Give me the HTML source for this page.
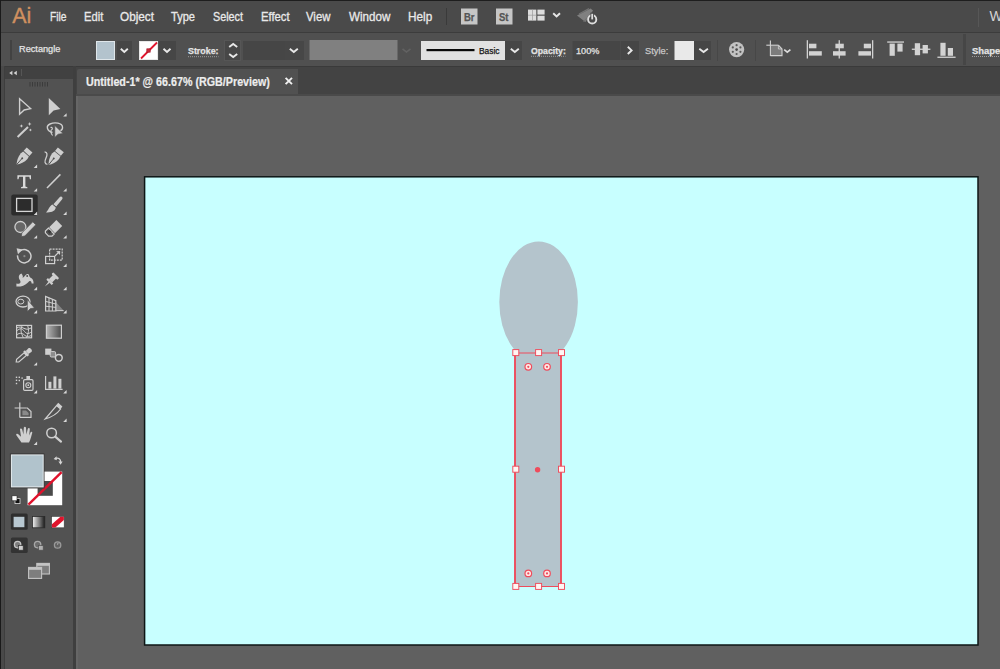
<!DOCTYPE html>
<html><head><meta charset="utf-8">
<style>
html,body{margin:0;padding:0;}
body{width:1000px;height:669px;overflow:hidden;background:#606060;position:relative;font-family:"Liberation Sans",sans-serif;color:#e6e6e6;}
.abs{position:absolute;}
#menubar{left:0;top:0;width:1000px;height:32px;background:#4a4a4a;border-top:1px solid #1e1e1e;box-sizing:border-box;}
#ctrl{left:0;top:32px;width:1000px;height:34px;background:#505050;border-top:1px solid #3c3c3c;box-sizing:border-box;}
#tabbar{left:74px;top:66px;width:926px;height:30px;background:#434343;border-top:1px solid #3a3a3a;border-bottom:2px solid #4a4a4a;box-sizing:border-box;}
#tab{left:77px;top:69px;width:221px;height:25px;background:#515151;border-radius:2px 0 0 0;}
#tools{left:0;top:66px;width:74px;height:603px;background:#525252;border-top:1px solid #3a3a3a;box-sizing:border-box;}
#toolhead{left:5px;top:67px;width:69px;height:12px;background:#414141;}
#leftedge{left:0;top:0;width:1px;height:669px;background:#1a1a1a;}
#leftstrip{left:1px;top:66px;width:4px;height:603px;background:#494949;border-right:1px solid #3e3e3e;box-sizing:border-box;}
#tooledge{left:73px;top:66px;width:3px;height:603px;background:#3f3f3f;}
#tooledge2{left:76px;top:96px;width:2px;height:573px;background:#666;}
#artboard{left:144px;top:176px;width:834px;height:470px;background:#c8ffff;border:1px solid #151515;box-sizing:border-box;}
.menu{position:absolute;top:9.5px;-webkit-text-stroke:.3px #e9e9e9;transform-origin:0 0;font-size:12.5px;color:#e9e9e9;white-space:nowrap;line-height:15px;}
.ct{position:absolute;transform-origin:0 0;white-space:nowrap;line-height:12px;font-size:9px;-webkit-text-stroke:.25px;color:#e4e4e4;}
.b{font-weight:bold;}
.dd{position:absolute;background:#434343;}
#tabtitle{left:85.6px;top:76.3px;-webkit-text-stroke:.2px #ededed;font-size:12px;font-weight:bold;color:#ededed;white-space:nowrap;line-height:13px;}
</style></head><body>
<div id="menubar" class="abs"></div>
<div id="ctrl" class="abs"></div>
<div id="tabbar" class="abs"></div>
<div id="tab" class="abs"></div>
<div id="tools" class="abs"></div>
<div id="leftstrip" class="abs"></div>
<div id="toolhead" class="abs"></div>
<div id="tooledge" class="abs"></div>
<div id="tooledge2" class="abs"></div>
<div id="leftedge" class="abs"></div>

<!-- ARTWORK -->
<svg class="abs" id="art" style="left:140px;top:170px" width="845" height="482" viewBox="140 170 845 482">
 <rect x="144.6" y="176.8" width="833.4" height="468.2" fill="#c8ffff" stroke="#0e1616" stroke-width="1.5"/>
 <ellipse cx="538.6" cy="302" rx="39.3" ry="60.5" fill="#b4c4cc"/>
 <rect x="515" y="353" width="46" height="233.5" fill="#b4c4cc"/><path d="M515,353 V586.5 M561,353 V586.5" stroke="#ee4c5c" stroke-width="1.9" fill="none"/><path d="M515,353 H561 M515,586.5 H561" stroke="#ee4c5c" stroke-width="1.2" fill="none"/>
 <rect x="512.8" y="349.6" width="6" height="6" fill="#fff5f3" stroke="#ee4c5c" stroke-width=".95"/><rect x="535.6" y="349.6" width="6" height="6" fill="#fff5f3" stroke="#ee4c5c" stroke-width=".95"/><rect x="558.5" y="349.6" width="6" height="6" fill="#fff5f3" stroke="#ee4c5c" stroke-width=".95"/>
 <rect x="512.8" y="466.2" width="6" height="6" fill="#fff5f3" stroke="#ee4c5c" stroke-width=".95"/><rect x="558.5" y="466.2" width="6" height="6" fill="#fff5f3" stroke="#ee4c5c" stroke-width=".95"/>
 <rect x="512.8" y="583.4" width="6" height="6" fill="#fff5f3" stroke="#ee4c5c" stroke-width=".95"/><rect x="535.6" y="583.4" width="6" height="6" fill="#fff5f3" stroke="#ee4c5c" stroke-width=".95"/><rect x="558.5" y="583.4" width="6" height="6" fill="#fff5f3" stroke="#ee4c5c" stroke-width=".95"/>
 <circle cx="537.6" cy="469.8" r="2.7" fill="#ee4c5c"/>
 <circle cx="528.3" cy="366.8" r="3.3" fill="#ffe9e6" stroke="#ee4c5c" stroke-width="1.2"/><circle cx="528.3" cy="366.8" r="1.1" fill="#ee4c5c"/><circle cx="547" cy="366.8" r="3.3" fill="#ffe9e6" stroke="#ee4c5c" stroke-width="1.2"/><circle cx="547" cy="366.8" r="1.1" fill="#ee4c5c"/><circle cx="528.3" cy="573.4" r="3.3" fill="#ffe9e6" stroke="#ee4c5c" stroke-width="1.2"/><circle cx="528.3" cy="573.4" r="1.1" fill="#ee4c5c"/><circle cx="547" cy="573.4" r="3.3" fill="#ffe9e6" stroke="#ee4c5c" stroke-width="1.2"/><circle cx="547" cy="573.4" r="1.1" fill="#ee4c5c"/>
</svg>
<!-- MENU TEXT -->
<div class="menu" id="m1" style="left:50.4px;transform:scaleX(.822)">File</div>
<div class="menu" id="m2" style="left:84.4px;transform:scaleX(.893)">Edit</div>
<div class="menu" id="m3" style="left:120px;transform:scaleX(.942)">Object</div>
<div class="menu" id="m4" style="left:171px;transform:scaleX(.886)">Type</div>
<div class="menu" id="m5" style="left:213px;transform:scaleX(.862)">Select</div>
<div class="menu" id="m6" style="left:261px;transform:scaleX(.902)">Effect</div>
<div class="menu" id="m7" style="left:306px;transform:scaleX(.907)">View</div>
<div class="menu" id="m8" style="left:349px;transform:scaleX(.930)">Window</div>
<div class="menu" id="m9" style="left:408.4px;transform:scaleX(.942)">Help</div>
<div class="menu" id="mW" style="left:989.4px;top:6.5px;font-size:14px;line-height:18px;color:#d4d4d4;-webkit-text-stroke:0;">W</div>
<div class="abs" id="ailogo" style="left:12.2px;top:2.9px;font-size:21.5px;line-height:26px;color:#cf9060;-webkit-text-stroke:.35px #cf9060;transform:scaleX(1.0);transform-origin:0 0;">Ai</div>

<!-- CONTROL BAR WIDGETS -->
<svg class="abs" id="ctrlsvg" style="left:0;top:0" width="1000" height="669" viewBox="0 0 1000 669">
 <!-- grip -->
 <rect x="10" y="40" width="2" height="20" fill="#424242"/>
 <!-- fill swatch -->
 <rect x="96.5" y="41.5" width="18" height="18" fill="#b3c3cd" stroke="#dfe6ea" stroke-width="1"/>
 <rect x="117" y="41" width="15" height="19" fill="#464646"/>
 <polyline points="120.8,48.8 124.3,52 127.8,48.8" fill="none" stroke="#e8e8e8" stroke-width="1.9"/>
 <!-- stroke swatch -->
 <rect x="139.5" y="41.5" width="18" height="18" fill="#ffffff" stroke="#e8e8e8" stroke-width="1"/>
 <line x1="141" y1="58.5" x2="157" y2="42.5" stroke="#e0142c" stroke-width="1.8"/>
 <rect x="146.8" y="48.8" width="3.4" height="3.4" fill="#c8283a" stroke="#a01020" stroke-width=".6"/>
 <rect x="159" y="41" width="17" height="19" fill="#464646"/>
 <polyline points="163.5,48.8 167,52 170.5,48.8" fill="none" stroke="#e8e8e8" stroke-width="1.9"/>
 <!-- Stroke underline -->
 <line x1="188" y1="56.7" x2="218.5" y2="56.7" stroke="#9c9c9c" stroke-width="1" stroke-dasharray="1,1"/>
 <!-- spinner -->
 <rect x="224.5" y="40.5" width="16" height="20" fill="#474747" stroke="#565656" stroke-width="1"/>
 <polyline points="229.2,47 233.2,44 237.2,47" fill="none" stroke="#e8e8e8" stroke-width="1.9"/>
 <polyline points="229.2,54 233.2,57 237.2,54" fill="none" stroke="#e8e8e8" stroke-width="1.9"/>
 <rect x="243" y="41" width="42" height="19" fill="#464646"/>
 <rect x="285" y="41" width="19" height="19" fill="#474747"/>
 <polyline points="289.8,48.8 293.8,52 297.8,48.8" fill="none" stroke="#e8e8e8" stroke-width="1.9"/>
 <!-- profile disabled -->
 <rect x="309.5" y="40" width="88" height="20" fill="#808080"/>
 <polyline points="402.5,48.8 406.5,52 410.5,48.8" fill="none" stroke="#626262" stroke-width="1.6"/>
 <!-- brush -->
 <rect x="421" y="41" width="84" height="19" fill="#e1e1e1"/>
 <rect x="426.5" y="49" width="48" height="2.2" fill="#0a0a0a"/>
 <rect x="505" y="41" width="17" height="19" fill="#464646"/>
 <polyline points="510.8,48.8 514.8,52 518.8,48.8" fill="none" stroke="#e8e8e8" stroke-width="1.9"/>
 <!-- Opacity underline -->
 <line x1="531" y1="56.3" x2="565.5" y2="56.3" stroke="#9c9c9c" stroke-width="1" stroke-dasharray="1,1"/>
 <rect x="572.5" y="41" width="48" height="19" fill="#464646"/>
 <rect x="621" y="41" width="18" height="19" fill="#464646"/>
 <polyline points="627.8,46.8 631.6,50.4 627.8,54" fill="none" stroke="#e8e8e8" stroke-width="1.9"/>
 <!-- style -->
 <rect x="674.5" y="41" width="19.5" height="19" fill="#e9e9e9"/>
 <rect x="694" y="41" width="17" height="19" fill="#464646"/>
 <polyline points="699.3,48.8 703.6,52 707.9,48.8" fill="none" stroke="#e8e8e8" stroke-width="1.9"/>
 <line x1="717.5" y1="40" x2="717.5" y2="61" stroke="#474747" stroke-width="1"/>
 <!-- recolor -->
 <circle cx="736.6" cy="49.6" r="7.6" fill="#c2c2c2"/>
 <g fill="#5a5a5a">
  <circle cx="736.6" cy="45.2" r="1.1"/><circle cx="740.4" cy="47.4" r="1.1"/><circle cx="740.4" cy="51.8" r="1.1"/>
  <circle cx="736.6" cy="54" r="1.1"/><circle cx="732.8" cy="51.8" r="1.1"/><circle cx="732.8" cy="47.4" r="1.1"/>
  <circle cx="736.6" cy="49.6" r="1.3" fill="#4a4a4a"/>
 </g>
 <line x1="755.5" y1="40" x2="755.5" y2="61" stroke="#474747" stroke-width="1"/>
 <!-- doc setup -->
 <path d="M770.9,45.4 L778.4,45.4 L782,49 L782,55.4 L770.9,55.4 Z" fill="#7c7c7c"/>
 <g fill="none" stroke="#d2d2d2" stroke-width="1.1">
  <line x1="770.4" y1="40.5" x2="770.4" y2="56"/><line x1="766.3" y1="45.2" x2="778.4" y2="45.2"/>
  <polyline points="770.4,55.6 782,55.6 782,49 778.4,45.2"/>
  <polyline points="778.4,45.2 778.4,49 782,49" stroke-width=".8"/>
 </g>
 <polyline points="784.2,49.6 787.3,52.2 790.4,49.6" fill="none" stroke="#dcdcdc" stroke-width="1.7"/>
 <!-- align left -->
 <g fill="#d2d2d2">
  <rect x="806.7" y="40.2" width="1.3" height="18.3"/>
  <rect x="809" y="43.7" width="7.4" height="4.6"/><rect x="809" y="51.2" width="12.8" height="4.4"/>
 </g>
 <!-- align center -->
 <g fill="#d2d2d2">
  <rect x="838.6" y="40.2" width="1.3" height="18.3"/>
  <rect x="835.4" y="43.7" width="8.4" height="4.6"/><rect x="833" y="51.2" width="12.6" height="4.4"/>
 </g>
 <!-- align right -->
 <g fill="#d2d2d2">
  <rect x="872" y="40.2" width="1.3" height="18.3"/>
  <rect x="863.8" y="43.7" width="7.2" height="4.6"/><rect x="858.4" y="51.2" width="12.6" height="4.4"/>
 </g>
 <!-- align top -->
 <g fill="#d2d2d2">
  <rect x="887.2" y="41.4" width="16.8" height="1.3"/>
  <rect x="889.6" y="43.6" width="5.2" height="12.2"/><rect x="897.4" y="43.6" width="5.2" height="8"/>
 </g>
 <!-- align vcenter -->
 <g fill="#d2d2d2">
  <rect x="911.8" y="48.6" width="18.6" height="1.3"/>
  <rect x="914.8" y="43.2" width="5.3" height="12"/><rect x="922.6" y="45" width="5.3" height="8.4"/>
 </g>
 <!-- align bottom -->
 <g fill="#d2d2d2">
  <rect x="937.4" y="56.6" width="18.2" height="1.3"/>
  <rect x="940.4" y="42.8" width="5.2" height="13"/><rect x="947.8" y="48" width="5.2" height="7.8"/>
 </g>
 <rect x="963" y="34" width="3" height="31" fill="#464646"/>
 <line x1="972" y1="56.5" x2="1000" y2="56.5" stroke="#9c9c9c" stroke-width="1" stroke-dasharray="1,1"/>

 <!-- MENU BAR ICONS -->
 <line x1="446.5" y1="8" x2="446.5" y2="25" stroke="#3a3a3a" stroke-width="1"/>
 <rect x="461" y="8.5" width="16.5" height="16" fill="#c6c6c6"/>
 <rect x="496" y="8.5" width="16.5" height="16" fill="#c6c6c6"/>
 <g fill="#dcdcdc">
  <rect x="528" y="9.6" width="8.3" height="11"/><rect x="537.4" y="9.6" width="7.2" height="5"/>
  <rect x="537.4" y="15.7" width="7.2" height="4.9"/>
  <rect x="532" y="9.6" width=".7" height="11" fill="#9a9a9a"/><rect x="528" y="14.8" width="8.3" height=".7" fill="#9a9a9a"/>
 </g>
 <polyline points="553.2,13.2 556.6,16.4 560,13.2" fill="none" stroke="#e6e6e6" stroke-width="2"/>
 <!-- gpu icon -->
 <g>
  <path d="M577,15.6 L590.6,8.4 L593,10.6 L585.4,22 Z" fill="#808080"/>
  <path d="M579,14 L589,8.6 M583.6,21.6 L592,12.6" stroke="#727272" stroke-width="1.2"/>
  <circle cx="592.2" cy="19.4" r="4.1" fill="#4a4a4a" stroke="#dedede" stroke-width="1.9"/>
  <rect x="590.4" y="12.6" width="3.6" height="5.4" fill="#4a4a4a"/>
  <line x1="592.2" y1="13.8" x2="592.2" y2="19.4" stroke="#dedede" stroke-width="1.8"/>
 </g>
 <line x1="978.5" y1="8" x2="978.5" y2="27" stroke="#575757" stroke-width="1"/>
</svg>
<div class="ct b" style="left:463.5px;top:10.5px;font-size:10.5px;color:#555;transform:scaleX(.9)">Br</div>
<div class="ct b" style="left:499px;top:10.5px;font-size:10.5px;color:#555;transform:scaleX(.9)">St</div>

<!-- CONTROL BAR TEXT -->
<div class="ct" id="c1" style="left:18.6px;top:43.3px;transform:scaleX(1.02)">Rectangle</div>
<div class="ct b" id="c2" style="left:188.2px;top:45.4px;transform:scaleX(.985)">Stroke:</div>
<div class="ct" id="c3" style="left:479px;top:45.4px;color:#111;transform:scaleX(.934)">Basic</div>
<div class="ct b" id="c4" style="left:530.8px;top:45px;transform:scaleX(.967)">Opacity:</div>
<div class="ct" id="c5" style="left:575.8px;top:45px;transform:scaleX(1.015)">100%</div>
<div class="ct" id="c6" style="left:644.7px;top:45.2px;color:#c8c8c8;transform:scaleX(1.033)">Style:</div>
<div class="ct b" id="c7" style="left:971.8px;top:45.2px;transform:scaleX(1.05)">Shape:</div>

<div id="tabtitle" class="abs" style="transform:scaleX(.894);transform-origin:0 0;">Untitled-1* @ 66.67% (RGB/Preview)</div>
<svg class="abs" style="left:280px;top:72px" width="18" height="18" viewBox="280 72 18 18"><path d="M285.6,77.8 L292,84.2 M292,77.8 L285.6,84.2" stroke="#f0f0f0" stroke-width="1.9"/></svg>

<!-- TOOLBOX -->
<svg class="abs" id="toolsvg" style="left:0;top:66px" width="76" height="603" viewBox="0 66 76 603">
 <!-- header arrows -->
 <path d="M12.4,70.8 L9.2,73 L12.4,75.2 Z M16.8,70.8 L13.6,73 L16.8,75.2 Z" fill="#d2d2d2"/>
 <rect x="21" y="69" width="1" height="7" fill="#565656"/>
 <!-- gripper -->
 <g fill="#3b3b3b">
  <rect x="29.5" y="82" width="1" height="4.5"/><rect x="32" y="82" width="1" height="4.5"/><rect x="34.5" y="82" width="1" height="4.5"/><rect x="37" y="82" width="1" height="4.5"/><rect x="39.5" y="82" width="1" height="4.5"/><rect x="42" y="82" width="1" height="4.5"/><rect x="44.5" y="82" width="1" height="4.5"/><rect x="47" y="82" width="1" height="4.5"/>
 </g>
 <!-- selection -->
 <path d="M19.6,98.8 L19.6,114.2 L24.2,110 L30.6,108.6 Z" fill="none" stroke="#cfcfcf" stroke-width="1.4" stroke-linejoin="miter"/>
 <!-- direct selection -->
 <path d="M48.8,98 L48.8,115.2 L53.6,110.6 L60.4,109 Z" fill="#cfcfcf"/>
 <path d="M66.6,113.2 L66.6,116.6 L63.2,116.6 Z" fill="#d8d8d8"/>
 <!-- magic wand -->
 <line x1="17.6" y1="137" x2="28" y2="127" stroke="#cfcfcf" stroke-width="2"/>
 <path d="M21.4,124.2 L22,125.5 L23.3,126 L22,126.5 L21.4,127.8 L20.8,126.5 L19.5,126 L20.8,125.5 Z" fill="#cfcfcf"/>
 <path d="M29.6,122 L30.2,123.4 L31.6,124 L30.2,124.6 L29.6,126 L29,124.6 L27.6,124 L29,123.4 Z" fill="#cfcfcf"/>
 <path d="M30.4,128.4 L30.9,129.5 L32,130 L30.9,130.5 L30.4,131.6 L29.9,130.5 L28.8,130 L29.9,129.5 Z" fill="#cfcfcf"/>
 <!-- lasso -->
 <path d="M52.5,132.5 C47,131 45.5,126 50,124 C55,121.8 62,123 62.5,127 C62.8,129 61,130.5 59.5,131" fill="none" stroke="#cfcfcf" stroke-width="1.4"/>
 <path d="M50.5,127.5 C52.5,127 53,129 51.6,129.8 C50.4,130.4 50.6,133 52.6,135.5" fill="none" stroke="#cfcfcf" stroke-width="1.1"/>
 <path d="M54.8,125.6 L54.8,137.4 L58,134.2 L63,133.4 Z" fill="#cfcfcf" stroke="#505050" stroke-width=".6"/>
 <!-- pen -->
 <g transform="translate(16.6,164.6) rotate(-48.5)">
  <path d="M0,0 C3,-2.4 7,-4.4 11.4,-4.4 L14.2,-3.8 L14.2,3.8 L11.4,4.4 C7,4.4 3,2.4 0,0 Z" fill="#cfcfcf"/>
  <rect x="15" y="-3.8" width="4.6" height="7.6" fill="#cfcfcf"/>
  <line x1="0" y1="0" x2="8" y2="0" stroke="#505050" stroke-width=".9"/><circle cx="8.4" cy="0" r="1" fill="#505050"/>
 </g>
 <path d="M37.1,164.6 L37.1,168.0 L33.7,168.0 Z" fill="#d8d8d8"/>
 <!-- curvature -->
 <g transform="translate(48.5,165) rotate(-51)">
  <path d="M0,0 C3,-2.4 7,-4.4 11.4,-4.4 L14.2,-3.8 L14.2,3.8 L11.4,4.4 C7,4.4 3,2.4 0,0 Z" fill="#cfcfcf"/>
  <rect x="15" y="-3.8" width="4.6" height="7.6" fill="#cfcfcf"/>
  <line x1="0" y1="0" x2="8" y2="0" stroke="#505050" stroke-width=".9"/><circle cx="8.4" cy="0" r="1" fill="#505050"/>
 </g>
 <path d="M44.6,151.8 C47.6,152 47.4,155 46,158 C44.4,161.5 44.6,164.2 47.4,164.4" fill="none" stroke="#cfcfcf" stroke-width="1.3"/>
 <!-- type -->
 <path d="M17.4,175.2 L31,175.2 L31,179.2 L29.9,179.2 L29.3,176.8 L25.4,176.8 L25.4,186.4 L27.4,187.2 L27.4,188.3 L21,188.3 L21,187.2 L23,186.4 L23,176.8 L19.1,176.8 L18.5,179.2 L17.4,179.2 Z" fill="#dadada"/>
 <path d="M37.1,188.2 L37.1,191.6 L33.7,191.6 Z" fill="#d8d8d8"/>
 <!-- line -->
 <line x1="47" y1="188" x2="60.4" y2="174.4" stroke="#cfcfcf" stroke-width="1.5"/>
 <path d="M66.6,188.2 L66.6,191.6 L63.2,191.6 Z" fill="#d8d8d8"/>
 <!-- rectangle (selected) -->
 <rect x="11.3" y="194.6" width="26.4" height="21" rx="2" fill="#2c2c2c"/>
 <rect x="16.6" y="198.4" width="15.4" height="13" fill="none" stroke="#d6d6d6" stroke-width="1.3"/>
 <path d="M37.2,211.6 L37.2,215.0 L33.800000000000004,215.0 Z" fill="#d8d8d8"/>
 <!-- paintbrush -->
 <path d="M61.6,196.8 C62.8,197.4 62.8,198.6 62,199.6 L56.2,206.6 L53.4,204.2 L59.4,197.4 C60.2,196.6 61,196.4 61.6,196.8 Z" fill="#cfcfcf"/>
 <path d="M52.4,204.6 L55.8,207.6 C55.4,211 51.5,212.8 46,212.4 C48.6,210.5 49,206.2 52.4,204.6 Z" fill="#cfcfcf"/>
 <path d="M66.6,211.6 L66.6,215.0 L63.2,215.0 Z" fill="#d8d8d8"/>
 <!-- shaper -->
 <circle cx="20.4" cy="227" r="5.5" fill="#666" stroke="#cfcfcf" stroke-width="1.3"/>
 <path d="M21.8,233 L32.8,221.8 L35.8,224.8 L24.8,236 L21.4,236.6 Z" fill="#cfcfcf" stroke="#505050" stroke-width=".7"/>
 <path d="M37.1,235.2 L37.1,238.6 L33.7,238.6 Z" fill="#d8d8d8"/>
 <!-- eraser -->
 <path d="M56.4,220 L62.2,226 L55,233.2 L49.2,227.2 Z" fill="#cfcfcf"/>
 <path d="M48.4,228 L54.2,234 L52,236.2 L48.6,236.2 L45.4,232.8 L45.4,231 Z" fill="none" stroke="#cfcfcf" stroke-width="1.2"/>
 <rect x="48" y="230.4" width="3" height="2.6" fill="#3a3a3a" transform="rotate(45 49.5 231.7)"/>
 <path d="M66.6,235.2 L66.6,238.6 L63.2,238.6 Z" fill="#d8d8d8"/>
 <!-- rotate -->
 <path d="M20,251 A6.7,6.7 0 1 1 17.6,255.4" fill="none" stroke="#cfcfcf" stroke-width="1.5"/><circle cx="24.4" cy="256.2" r="1.1" fill="#8a8a8a"/>
 <path d="M16.6,248.2 L22.6,249.6 L18,254.2 Z" fill="#cfcfcf"/>
 <path d="M37.1,263.59999999999997 L37.1,267.0 L33.7,267.0 Z" fill="#d8d8d8"/>
 <!-- scale -->
 <rect x="45.6" y="256.4" width="9" height="7.2" fill="none" stroke="#cfcfcf" stroke-width="1.2"/>
 <rect x="49.6" y="249.2" width="12.6" height="11" fill="none" stroke="#cfcfcf" stroke-width="1.2" stroke-dasharray="2,1"/>
 <path d="M60.2,251 L56.2,251.2 L60,255 Z" fill="#cfcfcf"/><line x1="55" y1="256" x2="59" y2="252" stroke="#cfcfcf" stroke-width="1.1"/>
 <path d="M66.6,263.59999999999997 L66.6,267.0 L63.2,267.0 Z" fill="#d8d8d8"/>
 <!-- width/warp -->
 <path d="M16.4,286.4 L16.4,283.6 C20,284.4 21.5,282.5 19.8,280 C18,277.4 18.8,274.4 21.4,273.6 C22.4,275 23.4,276.4 22.6,278 C25,276.6 25.6,274.4 27.4,274 C29.6,273.8 28.8,276.8 30.6,277.8 C32.6,278.6 33.6,280.6 33.6,283.4 L31.6,283.4 C31.6,281.4 30.6,280.4 29.2,281.2 C27,283.6 24.2,286 20.6,286.4 Z" fill="#cfcfcf"/>
 <circle cx="27.2" cy="276" r="1" fill="#505050"/>
 <path d="M37.1,286.8 L37.1,290.20000000000005 L33.7,290.20000000000005 Z" fill="#d8d8d8"/>
 <!-- puppet pin -->
 <g transform="translate(44.8,286.6) rotate(-45)">
  <path d="M0,0 L6.2,-0.9 L6.2,0.9 Z" fill="#cfcfcf"/>
  <rect x="6" y="-3.8" width="2.2" height="7.6" fill="#cfcfcf"/>
  <rect x="8" y="-2.3" width="6" height="4.6" fill="#cfcfcf"/>
  <rect x="13.6" y="-4.2" width="2.6" height="8.4" rx="1" fill="#cfcfcf"/>
 </g>
 <path d="M66.6,286.8 L66.6,290.20000000000005 L63.2,290.20000000000005 Z" fill="#d8d8d8"/>
 <!-- shape builder -->
 <ellipse cx="23" cy="301.6" rx="7" ry="5.4" fill="none" stroke="#cfcfcf" stroke-width="1.3"/>
 <ellipse cx="20.8" cy="301.6" rx="3" ry="2.4" fill="none" stroke="#cfcfcf" stroke-width="1"/>
 <path d="M27.4,299.6 L27.4,311.6 L30.4,308.6 L34.4,308 Z" fill="#cfcfcf" stroke="#505050" stroke-width=".6"/>
 <path d="M37.1,310.0 L37.1,313.40000000000003 L33.7,313.40000000000003 Z" fill="#d8d8d8"/>
 <!-- perspective grid -->
 <path d="M55.8,302 L63.6,310.6 L55.8,310.8 Z" fill="#858585"/>
 <path d="M45.6,296.4 L45.6,311 L55.8,310.8 L55.8,300.6 Z" fill="none" stroke="#cfcfcf" stroke-width="1.2"/>
 <path d="M49,297.8 L49,310.9 M52.4,299.2 L52.4,310.9 M45.6,301.4 L55.8,304 M45.6,306.2 L55.8,307.4 M55.8,310.7 L63.6,310.6" fill="none" stroke="#cfcfcf" stroke-width="1"/>
 <path d="M66.6,310.0 L66.6,313.4 L63.2,313.4 Z" fill="#d8d8d8"/>
 <!-- mesh -->
 <rect x="16.6" y="325.4" width="15" height="12.4" fill="none" stroke="#cfcfcf" stroke-width="1.2"/>
 <path d="M16.6,331 C20,328 22,328 24.4,331.4 C27,334.6 29,334 31.6,331.6 M22.4,325.4 C20,329 21,333 23.4,337.8 M27.4,325.4 C29.4,329 28.4,334 26.4,337.8 M16.6,335 C20,332 23,333.4 25,335.6 C27,337 29.6,336.4 31.6,335.4 M16.6,328 C19,326.6 21.6,326.8 24,328.4 C27,330 29.6,329 31.6,327.6" fill="none" stroke="#cfcfcf" stroke-width="1"/>
 <!-- gradient -->
 <defs><linearGradient id="g1" x1="0" x2="1" y1="0" y2="0"><stop offset="0" stop-color="#b8b8b8"/><stop offset="1" stop-color="#4a4a4a"/></linearGradient>
 <linearGradient id="g2" x1="0" x2="1" y1="0" y2="0"><stop offset="0" stop-color="#f4f4f4"/><stop offset="1" stop-color="#1a1a1a"/></linearGradient></defs>
 <rect x="46.4" y="325.2" width="15" height="13" fill="url(#g1)" stroke="#cfcfcf" stroke-width="1.2"/>
 <!-- eyedropper -->
 <g transform="translate(16.2,362) rotate(-41)">
  <path d="M0,0 L2,-1.7 L12,-1.7 L12,1.7 L2,1.7 Z" fill="none" stroke="#cfcfcf" stroke-width="1.2"/>
  <rect x="12" y="-3.2" width="2.4" height="6.4" fill="#cfcfcf"/>
  <path d="M14.4,-2 L18,-2.4 C20.4,-2.4 20.4,2.4 18,2.4 L14.4,2 Z" fill="#cfcfcf"/>
 </g>
 <path d="M37.1,362.2 L37.1,365.6 L33.7,365.6 Z" fill="#d8d8d8"/>
 <!-- blend -->
 <rect x="45.2" y="348.6" width="6.2" height="6.2" fill="#cfcfcf"/>
 <rect x="50.2" y="351.6" width="5.4" height="5.4" rx="1.2" fill="#8c8c8c" stroke="#cfcfcf" stroke-width="1"/>
 <circle cx="58.8" cy="357.8" r="3.4" fill="#505050" stroke="#cfcfcf" stroke-width="1.5"/>
 <!-- symbol sprayer -->
 <rect x="23.6" y="379.6" width="9.4" height="10.8" rx="1.2" fill="none" stroke="#cfcfcf" stroke-width="1.2"/>
 <rect x="26.4" y="376" width="3.6" height="3.4" fill="#cfcfcf"/>
 <circle cx="28.3" cy="385.2" r="2.5" fill="none" stroke="#cfcfcf" stroke-width="1.1"/><circle cx="28.3" cy="385.2" r=".9" fill="#cfcfcf"/>
 <g fill="#cfcfcf"><rect x="15.8" y="376.6" width="1.4" height="1.4"/><rect x="18.6" y="376.6" width="1.4" height="1.4"/><rect x="21.4" y="377.4" width="1.4" height="1.4"/><rect x="15.8" y="379.6" width="1.4" height="1.4"/><rect x="18.6" y="379.8" width="1.4" height="1.4"/><rect x="15.8" y="382.8" width="1.4" height="1.4"/></g>
 <path d="M37.1,390.0 L37.1,393.40000000000003 L33.7,393.40000000000003 Z" fill="#d8d8d8"/>
 <!-- graph -->
 <path d="M45.6,376 L45.6,389.4 L62.6,389.4" fill="none" stroke="#cfcfcf" stroke-width="1.2"/>
 <rect x="48.4" y="381.8" width="3" height="6.8" fill="#cfcfcf"/><rect x="53.4" y="376.4" width="3" height="12.2" fill="#cfcfcf"/><rect x="58.4" y="378.8" width="3" height="9.8" fill="#cfcfcf"/>
 <path d="M66.6,390.0 L66.6,393.40000000000003 L63.2,393.40000000000003 Z" fill="#d8d8d8"/>
 <!-- artboard -->
 <path d="M19.8,402.4 L19.8,417.6 M14.6,408 L26.4,408" fill="none" stroke="#cfcfcf" stroke-width="1.2"/>
 <path d="M19.8,417.4 L31,417.4 L31,411.6 L27.4,408 L26.4,408" fill="none" stroke="#cfcfcf" stroke-width="1.2"/>
 <path d="M22.4,410.4 L26,410.4 L28.6,413 L28.6,415.2 L22.4,415.2 Z" fill="#8a8a8a"/>
 <!-- slice -->
 <path d="M45.2,419 L56.6,405.6 L60.6,409 C57,414 52,417 45.2,419 Z" fill="none" stroke="#cfcfcf" stroke-width="1.2"/>
 <path d="M56.2,405.2 L58.2,402.8 L62.4,406.4 L60.6,409 Z" fill="#cfcfcf"/>
 <path d="M66.6,418.59999999999997 L66.6,422.0 L63.2,422.0 Z" fill="#d8d8d8"/>
 <!-- hand -->
 <path d="M21.4,442.6 C19.4,439 17.4,437 16.2,435 C16,433.6 17.6,433.4 18.6,434.4 L21,436.8 L20,429.6 C20,428.2 21.8,428.2 22.2,429.6 L23.4,434.6 L23.8,427.8 C24,426.4 25.8,426.4 26,427.8 L26.4,434.6 L27.8,428.8 C28.2,427.6 29.8,427.8 29.8,429.2 L29.2,435.6 L30.6,432.2 C31.2,431.2 32.6,431.6 32.2,433 C31.4,436 30.6,439.6 29,442.6 Z" fill="#cfcfcf"/>
 <path d="M37.1,441.59999999999997 L37.1,445.0 L33.7,445.0 Z" fill="#d8d8d8"/>
 <!-- zoom -->
 <circle cx="51.6" cy="433" r="4.8" fill="none" stroke="#cfcfcf" stroke-width="1.5"/>
 <line x1="55.2" y1="436.6" x2="61" y2="441.6" stroke="#cfcfcf" stroke-width="2.2" stroke-linecap="round"/>

 <!-- fill / stroke -->
 <rect x="27.6" y="471.6" width="34.6" height="33.6" fill="#ffffff"/>
 <rect x="37.6" y="481" width="15.2" height="14.8" fill="#4a4a4a"/>
 <line x1="28.4" y1="504.6" x2="61.6" y2="472.2" stroke="#e0122c" stroke-width="2.4"/>
 <rect x="9.9" y="453.4" width="34.6" height="35" fill="#383838"/>
 <rect x="10.9" y="454.4" width="32.8" height="33" fill="#e4eaed"/>
 <rect x="11.9" y="455.4" width="30.8" height="31" fill="#b1c3cc"/>
 <!-- swap -->
 <path d="M55.2,458.6 C58.4,457.2 61,459.2 60.6,462.4" fill="none" stroke="#d4d4d4" stroke-width="1.3"/>
 <path d="M53.6,459 L56.6,456.2 L56.8,460.2 Z M58.4,461.6 L62.6,461.6 L60.6,464.8 Z" fill="#d4d4d4"/>
 <!-- default -->
 <rect x="15" y="498.6" width="5" height="5" fill="#111" stroke="#ddd" stroke-width=".8"/>
 <rect x="12" y="495.8" width="5" height="5" fill="#ffffff" stroke="#222" stroke-width=".6"/>
 <!-- color / gradient / none -->
 <rect x="10.9" y="513.6" width="16.8" height="16.2" rx="1.5" fill="#2e2e2e"/>
 <rect x="13.6" y="516.8" width="10.8" height="10.4" fill="#b8c8d1"/>
 <rect x="32.4" y="516.4" width="12.4" height="11.4" fill="url(#g2)" stroke="#2a2a2a" stroke-width=".8"/>
 <rect x="51.6" y="516.4" width="12.6" height="11.4" fill="#ffffff" stroke="#3a3a3a" stroke-width=".6"/>
 <path d="M51.9,527.5 L51.9,524.2 L60.4,516.7 L63.9,516.7 L63.9,520 L55.4,527.5 Z" fill="#e0142c"/>
 <!-- draw modes -->
 <rect x="10.9" y="537.4" width="16.8" height="15.6" rx="1.5" fill="#333"/>
 <g fill="none" stroke="#c4c4c4" stroke-width="1.3">
  <circle cx="17.6" cy="544.6" r="3.2" fill="#7c7c7c"/><circle cx="37.6" cy="544.6" r="3.2" stroke="#a8a8a8" fill="#6c6c6c"/><circle cx="57.6" cy="545" r="3.2" stroke="#9a9a9a" fill="#626262"/>
 </g>
 <rect x="18.6" y="545.6" width="4.6" height="4.6" fill="#cfcfcf" stroke="#333" stroke-width=".7"/>
 <rect x="38.6" y="545.6" width="4.6" height="4.6" fill="#b0b0b0" stroke="#505050" stroke-width=".7"/>
 <path d="M57.6,545 L57.6,543 L59.4,543" stroke="#9a9a9a" stroke-width="1" fill="none"/>
 <!-- screen mode -->
 <rect x="36.8" y="563.4" width="12.6" height="10.6" fill="#7e7e7e" stroke="#c4c4c4" stroke-width="1.1"/>
 <rect x="36.8" y="563.4" width="12.6" height="2.4" fill="#c4c4c4"/>
 <rect x="28.6" y="567.4" width="13" height="11" fill="#7e7e7e" stroke="#c4c4c4" stroke-width="1.1"/>
 <rect x="28.6" y="567.4" width="13" height="2.4" fill="#c4c4c4"/>
</svg>
</body></html>
